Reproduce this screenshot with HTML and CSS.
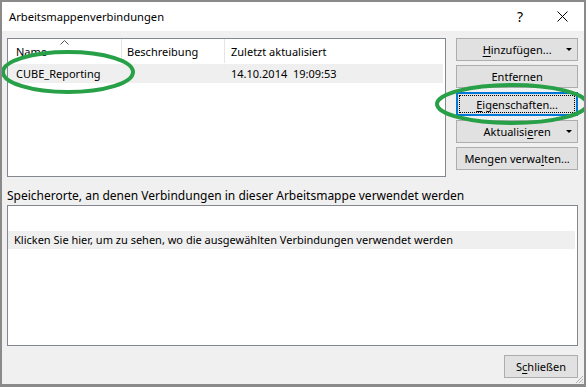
FILE: index.html
```html
<!DOCTYPE html>
<html>
<head>
    <title>Arbeitsmappenverbindungen</title>
    <link rel="stylesheet" href="styles.css">
</head>
<body>
    <div class="window">
        <div class="titlebar">
            <span class="title">Arbeitsmappenverbindungen</span>
            <span class="help">?</span>
            <span class="close">
                <svg width="11" height="11" viewBox="0 0 11 11">
                    <path d="M0.5 0.5 L10.5 10.5 M10.5 0.5 L0.5 10.5" stroke="#000" stroke-width="1" fill="none"/>
                </svg>
            </span>
        </div>

        <div class="content">
            <div class="top">
                <div class="list conn-list">
                    <div class="list-head">
                        <div class="col col-name">
                            Name
                            <svg class="sort" width="9" height="5" viewBox="0 0 9 5">
                                <polyline points="0.5,4.5 4.5,0.5 8.5,4.5" stroke="#555" stroke-width="1" fill="none"/>
                            </svg>
                        </div>
                        <div class="col col-desc">Beschreibung</div>
                        <div class="col col-date">Zuletzt aktualisiert</div>
                    </div>
                    <div class="list-row">
                        <div class="col col-name">CUBE_Reporting</div>
                        <div class="col col-desc"></div>
                        <div class="col col-date">14.10.2014&nbsp;&nbsp;19:09:53</div>
                    </div>
                </div>

                <div class="buttons">
                    <button class="btn has-caret"><u>H</u>inzufügen...<span class="caret"></span></button>
                    <button class="btn">Entfernen</button>
                    <button class="btn focused"><span class="focus-rect"><u>E</u>igenschaften...</span></button>
                    <button class="btn has-caret">Aktualisi<u>e</u>ren<span class="caret"></span></button>
                    <button class="btn">Mengen verwa<u>l</u>ten...</button>
                </div>
            </div>

            <div class="section-label">Speicherorte, an denen Verbindungen in dieser Arbeitsmappe verwendet werden</div>
            <div class="list usage-list">
                <div class="usage-row">Klicken Sie hier, um zu sehen, wo die ausgewählten Verbindungen verwendet werden</div>
            </div>

            <div class="footer">
                <button class="btn btn-close">S<u>c</u>hließen</button>
            </div>
        </div>

        <svg class="grip" width="10" height="10" viewBox="0 0 10 10">
            <path d="M9 2 L2 9 M9 5 L5 9 M9 8 L8 9" stroke="#b0b0b0" stroke-width="1" fill="none"/>
        </svg>

        <svg class="marks" width="586" height="387" viewBox="0 0 586 387">
            <ellipse cx="68" cy="72" rx="65" ry="20" stroke="#27a047" stroke-width="4" fill="none"/>
            <ellipse cx="512" cy="104" rx="75" ry="19" stroke="#27a047" stroke-width="4" fill="none"/>
        </svg>
    </div>
</body>
</html>
```

FILE: styles.css
```css
html, body {
    margin: 0;
    padding: 0;
}
body {
    font-family: "Noto Sans", "Open Sans", sans-serif;
    font-size: 11px;
    color: #000;
    background: #fff;
}
.window {
    position: relative;
    width: 586px;
    height: 387px;
    box-sizing: border-box;
    border: 2px solid #8a8a8a;
    border-bottom-width: 3px;
    background: #f0f0f0;
    overflow: hidden;
}
.titlebar {
    height: 29px;
    background: #fff;
    display: flex;
    align-items: center;
    padding-left: 7px;
}
.title {
    flex: 1;
    font-size: 11.2px;
}
.help {
    width: 14px;
    font-size: 14px;
    margin-right: 26px;
}
.close {
    display: flex;
    margin-right: 16px;
}
.content {
    padding: 7px 6px 0 5px;
}
.top {
    display: flex;
    height: 139px;
}
.list {
    background: #fff;
    border: 1px solid #828790;
    box-sizing: border-box;
}
.conn-list {
    width: 440px;
    height: 139px;
}
.list-head {
    display: flex;
    height: 24px;
    align-items: stretch;
}
.list-head .col {
    border-right: 1px solid #e5e5e5;
}
.list-head .col-date {
    border-right: none;
}
.col {
    display: flex;
    align-items: center;
    box-sizing: border-box;
    white-space: nowrap;
}
.col-name {
    position: relative;
    width: 114px;
    padding-left: 8px;
}
.col-desc {
    width: 103px;
    padding-left: 5px;
}
.col-date {
    flex: 1;
    padding-left: 6px;
}
.sort {
    position: absolute;
    left: 52px;
    top: 1px;
}
.list-row {
    display: flex;
    height: 19px;
    margin-top: 1px;
    margin-right: 2px;
    background: #efefef;
}
.buttons {
    display: flex;
    flex-direction: column;
    gap: 4px;
    margin-left: 10px;
    width: 122px;
}
.btn {
    position: relative;
    height: 23px;
    padding: 0;
    background: #e1e1e1;
    border: 1px solid #adadad;
    font-family: inherit;
    font-size: 11px;
    color: #000;
    display: flex;
    align-items: center;
    justify-content: center;
}
.btn u {
    text-underline-offset: 2px;
}
.caret {
    position: absolute;
    right: 5px;
    top: 9px;
    border-left: 3px solid transparent;
    border-right: 3px solid transparent;
    border-top: 3px solid #000;
}
.focused {
    border: 2px solid #0078d7;
    height: 24px;
}
.focus-rect {
    flex: 1;
    align-self: stretch;
    margin: 1px;
    border: 1px dotted #000;
    display: flex;
    align-items: center;
    justify-content: center;
}
.section-label {
    margin-top: 11px;
    height: 16px;
    line-height: 16px;
    font-size: 12px;
}
.usage-list {
    margin-top: 1px;
    height: 141px;
    padding-top: 25px;
}
.usage-row {
    height: 18px;
    line-height: 18px;
    margin-right: 2px;
    padding-left: 6px;
    background: #efefef;
}
.footer {
    display: flex;
    justify-content: flex-end;
    margin-top: 9px;
}
.btn-close {
    width: 74px;
}
.grip {
    position: absolute;
    right: 0;
    bottom: 0;
}
.marks {
    position: absolute;
    left: -2px;
    top: -2px;
    pointer-events: none;
}
```
